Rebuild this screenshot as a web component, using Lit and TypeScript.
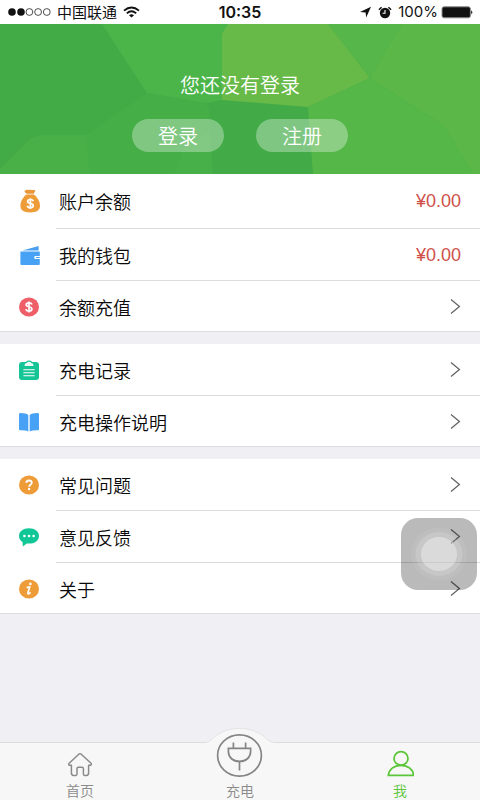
import { LitElement, html, svg, css, nothing, type TemplateResult } from "lit";
import { customElement, property } from "lit/decorators.js";
import { classMap } from "lit/directives/class-map.js";

interface MenuItem {
  label: string;
  icon: string;
  amount?: string;
}

const GROUPS: MenuItem[][] = [
  [
    { label: "账户余额", icon: "bag", amount: "¥0.00" },
    { label: "我的钱包", icon: "wallet", amount: "¥0.00" },
    { label: "余额充值", icon: "coin" },
  ],
  [
    { label: "充电记录", icon: "clipboard" },
    { label: "充电操作说明", icon: "book" },
  ],
  [
    { label: "常见问题", icon: "question" },
    { label: "意见反馈", icon: "chat" },
    { label: "关于", icon: "info" },
  ],
];

const DOLLAR = svg`<path d="M15 9.6C14.6 8.4 13.5 7.9 12 7.9C10.3 7.9 9.2 8.6 9.2 9.8C9.2 12.6 14.9 11 14.9 14C14.9 15.3 13.7 16 12 16C10.3 16 9.2 15.4 8.9 14.1M12 6.6V17.4" fill="none" stroke="#fff" stroke-width="1.7"/>`;

const ICONS: Record<string, TemplateResult> = {
  bag: svg`
    <path d="M8.4 1.4C9.8 .2 11 1.4 12.4 .8C14 .2 15 1.4 17 1C18.6 1 18.8 2.2 17.6 3L16.8 4.8H9.6L8 3.2C7.2 2.4 7.4 1.6 8.4 1.4Z" fill="#e9973a"/>
    <path d="M9.4 5.6H16.8C20.4 8.4 23 12.6 23 16.8C23 21.2 19.8 23.4 13.2 23.4C6.6 23.4 3.4 21.2 3.4 16.8C3.4 12.6 6 8.4 9.4 5.6Z" fill="#ee9c37"/>
    <g transform="translate(1.4 2.6)">${DOLLAR}</g>`,
  wallet: svg`
    <path d="M5.5 7.6L21.6 3V7.6Z" fill="#4a9fee"/>
    <path d="M3.4 8.6H22.8V13H18.6Q17.2 13 17.2 14.4Q17.2 16 18.6 16H22.8V21Q22.8 22 21.8 22H4.4Q3.4 22 3.4 21Z" fill="#47a2f5"/>
    <path d="M19 14H22.8V15H19Z" fill="#47a2f5"/>`,
  coin: svg`<ellipse cx="12" cy="12" rx="10" ry="9.4" fill="#ef5f68"/>${DOLLAR}`,
  clipboard: svg`
    <rect x="2" y="4" width="20" height="18" rx="3" fill="#14c595"/>
    <path d="M7 6.4Q7.4 3.9 9 3.8Q10 2.4 12 2.4Q14 2.4 15 3.8Q16.6 3.9 17 6.4Z" fill="#14c595"/>
    <path d="M7.6 8V6.6Q8 5.2 9.8 5Q10.4 3.8 12 3.8Q13.6 3.8 14.2 5Q16 5.2 16.4 6.6V8Z" fill="#e9fbf5"/>
    <path d="M6.4 11.8H17.6M6.4 14.8H17.6M6.4 17.8H17.6" stroke="#fff" stroke-width="1.1"/>`,
  book: svg`
    <path d="M2 4.4Q2 3 3.4 3.1Q9 3.2 11.3 4.9V21.4Q9 20.1 3 20.2Q2 20.2 2 19.2Z" fill="#47a2f5"/>
    <path d="M22 4.4Q22 3 20.6 3.1Q15 3.2 12.7 4.9V21.4Q15 20.1 21 20.2Q22 20.2 22 19.2Z" fill="#47a2f5"/>`,
  question: svg`
    <ellipse cx="12" cy="12" rx="10" ry="9.4" fill="#ee9c37"/>
    <path d="M9.3 9.9C9.4 8.3 10.4 7.5 12 7.5C13.6 7.5 14.8 8.4 14.8 9.8C14.8 11.7 12.1 11.7 12.1 13.7" fill="none" stroke="#fff" stroke-width="1.8"/>
    <circle cx="12.1" cy="16" r="1.2" fill="#fff"/>`,
  chat: svg`
    <path d="M12 3.2C17.8 3.2 22 6.4 22 10.9C22 15.4 17.8 18.6 12 18.6C11.2 18.6 10.6 18.6 9.8 18.5L5.8 21.4L5.6 17C3.4 15.6 2 13.6 2 10.9C2 6.4 6.2 3.2 12 3.2Z" fill="#12c797"/>
    <g fill="#fff"><circle cx="7.4" cy="11" r="1.3"/><circle cx="12" cy="11" r="1.3"/><circle cx="16.6" cy="11" r="1.3"/></g>`,
  info: svg`
    <ellipse cx="12" cy="12" rx="10" ry="9.4" fill="#ee9c37"/>
    <circle cx="13.4" cy="6.9" r="1.3" fill="#fff"/>
    <path d="M9.6 10.6L12.8 9.8L10.9 15.8Q10.6 17.3 11.7 16.9L13.6 15.4" fill="none" stroke="#fff" stroke-width="1.6" stroke-linejoin="round"/>`,
};

@customElement("menu-row")
class MenuRow extends LitElement {
  @property({ attribute: false }) item!: MenuItem;

  static styles = css`
    :host {
      display: block;
    }
    .row {
      display: flex;
      align-items: center;
      gap: 18px;
      min-height: 51px;
      padding: 0 19px 0 17px;
      box-sizing: border-box;
      color: #0a0a0a;
      font-size: 18px;
      line-height: 24px;
      text-decoration: none;
    }
    .icon {
      width: 24px;
      height: 24px;
      flex: none;
    }
    .label {
      flex: 1;
      font-weight: 350;
    }
    .amount {
      color: #cf5049;
      font-family: "Liberation Sans", Arial, sans-serif;
    }
    .chevron {
      width: 12px;
      height: 18px;
      flex: none;
    }
  `;

  render() {
    const { label, icon, amount } = this.item;
    return html`
      <a class="row" href="#">
        <svg class="icon" viewBox="0 0 24 24" aria-hidden="true">${ICONS[icon]}</svg>
        <span class="label">${label}</span>
        ${amount
          ? html`<span class="amount">${amount}</span>`
          : html`<svg class="chevron" viewBox="0 0 12 18" aria-hidden="true">
              <path d="M2 1.5L10.4 8.5L2 15.5" fill="none" stroke="#66666a" stroke-width="1.3" />
            </svg>`}
      </a>
    `;
  }
}

@customElement("status-bar")
class StatusBar extends LitElement {
  static styles = css`
    :host {
      display: grid;
      grid-template-columns: 1fr auto 1fr;
      align-items: center;
      height: 24px;
      padding: 0 7px;
      background: #fff;
      color: #111;
      font-size: 15px;
      line-height: 20px;
    }
    .side {
      display: flex;
      align-items: center;
      gap: 6px;
    }
    .end {
      justify-content: flex-end;
    }
    .latin {
      font-family: Inter, "Liberation Sans", sans-serif;
    }
    .time {
      font-family: Inter, "Liberation Sans", sans-serif;
      font-size: 16px;
      font-weight: 600;
    }
    .battery {
      margin-left: -3px;
    }
    svg {
      flex: none;
    }
  `;

  render() {
    return html`
      <div class="side">
        <svg width="44" height="10" viewBox="0 0 44 10" aria-hidden="true">
          <circle cx="5" cy="5" r="3.8" fill="#111" />
          <circle cx="14" cy="5" r="3.8" fill="#111" />
          ${[22.4, 31.1, 39.8].map(
            (x) => svg`<circle cx=${x} cy="5" r="3.4" fill="none" stroke="#222" stroke-width=".8"/>`
          )}
        </svg>
        <span>中国联通</span>
        <svg width="17" height="12" viewBox="0 0 17 12" aria-hidden="true">
          <g fill="none" stroke="#111" stroke-width="1.9">
            <path d="M1 4.6Q8.5 -1.8 16 4.6" />
            <path d="M3.8 7.4Q8.5 3.2 13.2 7.4" />
          </g>
          <path d="M6 9.2Q8.5 7.2 11 9.2L8.5 11.6Z" fill="#111" />
        </svg>
      </div>
      <span class="time">10:35</span>
      <div class="side end">
        <svg width="13" height="12" viewBox="0 0 13 12" aria-hidden="true">
          <path d="M12 .8L7.2 11.4L6.6 6.4L1 6Z" fill="#111" />
        </svg>
        <svg width="14" height="13" viewBox="0 0 14 13" aria-hidden="true">
          <circle cx="7" cy="7" r="5.2" fill="#111" />
          <path d="M7 4V7.3H4.6" fill="none" stroke="#fff" stroke-width="1.1" />
          <path d="M.9 3.8L3.6 1.2M13.1 3.8L10.4 1.2" stroke="#111" stroke-width="1.5" />
        </svg>
        <span class="latin">100%</span>
        <svg class="battery" width="32" height="13" viewBox="0 0 32 13" aria-hidden="true">
          <rect x="1" y=".8" width="28.4" height="11" rx="2" fill="#111" stroke="#8c8c8c" />
          <path d="M30.2 4.2Q32.4 6.3 30.2 8.4Z" fill="#111" />
        </svg>
      </div>
    `;
  }
}

@customElement("tab-bar")
class TabBar extends LitElement {
  static styles = css`
    :host {
      display: block;
      position: sticky;
      bottom: 0;
    }
    .bar {
      display: grid;
      grid-template-columns: repeat(3, 1fr);
      grid-template-rows: 100%;
      height: 58px;
      box-sizing: border-box;
      border-top: 1px solid #dcdcde;
      background: #f7f7f7;
    }
    .tab {
      display: flex;
      flex-direction: column;
      align-items: center;
      justify-content: flex-end;
      min-height: 0;
      color: #8a8a8a;
      font-size: 14px;
      font-weight: 350;
      line-height: 20px;
      text-decoration: none;
    }
    .active {
      color: #5cc63a;
    }
    .glyph {
      flex: none;
      width: 28px;
      height: 28px;
      margin-bottom: 2px;
    }
    .raised {
      flex: none;
      width: 68px;
      height: 50px;
      margin-bottom: 2px;
    }
  `;

  render() {
    return html`
      <nav class="bar">
        <a class="tab" href="#">
          <svg class="glyph" viewBox="0 0 28 28" aria-hidden="true">
            <path
              d="M3.2 15.2Q2.2 14 3.4 13L12.8 4.2Q14 3.2 15.2 4.2L24.8 13Q26 14 24.8 15.2H22.6V23Q22.6 25.4 20.4 25.4H18.6Q17.4 25.4 17.4 24V18.6Q17.4 17.2 16 17.2H12.4Q11 17.2 11 18.6V24Q11 25.4 9.8 25.4H7.6Q5.4 25.4 5.4 23V15.2Z"
              fill="none" stroke="currentColor" stroke-width="1.5" stroke-linejoin="round"
            />
          </svg>
          <span>首页</span>
        </a>
        <a class="tab" href="#">
          <svg class="raised" viewBox="0 0 68 50" aria-hidden="true">
            <path d="M0 14.5Q3 14.5 6 11.2C20 -3.2 47 -3.2 61 11.2Q64 14.5 68 14.5V50H0Z" fill="#f7f7f7" />
            <path d="M0 14.5Q3 14 6 11.2C20 -3.2 47 -3.2 61 11.2Q64 14 68 14.5" fill="none" stroke="#e4e4e6" />
            <g fill="none" stroke="#858585" stroke-width="1.7">
              <ellipse cx="33.5" cy="27.5" rx="21.9" ry="20.6" />
              <path d="M21.5 20.4H45.5M22.4 20.4V23.6C22.4 29.6 27 33.4 33.5 33.4C40 33.4 44.6 29.6 44.6 23.6V20.4M27.4 20V14.4M39.6 20V14.4M33.5 33.4V42.6" />
            </g>
          </svg>
          <span>充电</span>
        </a>
        <a class=${classMap({ tab: true, active: true })} href="#" aria-current="page">
          <svg class="glyph" viewBox="0 0 28 28" aria-hidden="true">
            <g fill="none" stroke="currentColor" stroke-width="1.8">
              <ellipse cx="15" cy="8.4" rx="7" ry="6.8" />
              <path d="M15 15.4C8 15.4 2.8 19.4 2.4 25.4H27.6C27.2 19.4 22 15.4 15 15.4Z" />
            </g>
          </svg>
          <span>我</span>
        </a>
      </nav>
    `;
  }
}

@customElement("app-root")
class AppRoot extends LitElement {
  static styles = css`
    :host {
      display: flex;
      flex-direction: column;
      position: relative;
      min-height: 100vh;
      background: #efeff4;
      font-family: "Noto Sans CJK SC", "Noto Sans", sans-serif;
    }
    .hero {
      display: grid;
      height: 150px;
      overflow: hidden;
      background: #43ab46;
      color: #fff;
    }
    .facets,
    .login {
      grid-area: 1 / 1;
      min-width: 0;
      min-height: 0;
    }
    .facets {
      width: 100%;
      height: 150px;
    }
    .login {
      z-index: 1;
      display: flex;
      flex-direction: column;
      align-items: center;
      justify-content: flex-end;
      gap: 20px;
      padding-bottom: 22px;
    }
    .prompt {
      margin: 0;
      font-size: 20px;
      font-weight: 350;
      line-height: 28px;
    }
    .actions {
      display: flex;
      gap: 32px;
    }
    .pill {
      width: 92px;
      height: 33px;
      padding: 0;
      border: 0;
      border-radius: 17px;
      background: rgba(255, 255, 255, 0.32);
      color: #fff;
      font-family: inherit;
      font-size: 20px;
      font-weight: 350;
      line-height: 33px;
    }
    .groups {
      display: flex;
      flex-direction: column;
      gap: 12px;
      padding-bottom: 24px;
    }
    .group {
      margin: 0;
      padding: 0;
      list-style: none;
      background: #fff;
      box-shadow: inset 0 -1px #dddde0;
    }
    .group:first-child li:first-child {
      padding: 1px 0 2px;
    }
    .divider {
      height: 1px;
      margin-left: 56px;
      background: #dcdcde;
    }
    .assist {
      position: absolute;
      top: 518px;
      right: 3px;
      width: 76px;
      height: 72px;
      padding: 0;
      border: 0;
      border-radius: 17px;
      background: rgba(0, 0, 0, 0.27);
    }
    .assist svg {
      display: block;
    }
    tab-bar {
      margin-top: auto;
    }
  `;

  render() {
    return html`
      <status-bar></status-bar>
      <header class="hero">
        <svg class="facets" viewBox="0 0 480 150" preserveAspectRatio="none" aria-hidden="true">
          <path d="M102 0H230L222 76L205 79L147 69Z" fill="#4cb54a" />
          <path d="M147 69L205 79L214 90V150H90L86 111Z" fill="#45ae47" />
          <path d="M0 145L28 117Q34 112 42 111H86L90 150H0Z" fill="#48b047" />
          <path d="M174 150L184 124L209 108L213 150Z" fill="#48b049" />
          <path d="M209 80L222 76L308 83L313 150H213Z" fill="#42ab48" />
          <path d="M228 0L222 10V76L308 83L370 54L328 0Z" fill="#68ba48" />
          <path d="M328 0H402L370 54Z" fill="#57b64a" />
          <path d="M402 0H480V150H473L444 102L370 54Z" fill="#5bb848" />
          <path d="M308 83L370 54L444 102L473 150H313Z" fill="#56b749" />
        </svg>
        <div class="login">
          <p class="prompt">您还没有登录</p>
          <div class="actions">
            <button class="pill" type="button">登录</button>
            <button class="pill" type="button">注册</button>
          </div>
        </div>
      </header>
      <main class="groups">
        ${GROUPS.map(
          (items) => html`
            <ul class="group">
              ${items.map(
                (item, i) => html`
                  <li>
                    ${i > 0 ? html`<div class="divider"></div>` : nothing}
                    <menu-row .item=${item}></menu-row>
                  </li>
                `
              )}
            </ul>
          `
        )}
      </main>
      <button class="assist" type="button" aria-label="AssistiveTouch">
        <svg width="76" height="72" viewBox="0 0 76 72" aria-hidden="true">
          <g fill="#fff">
            <ellipse cx="38" cy="36" rx="28" ry="26.5" fill-opacity=".06" />
            <ellipse cx="38" cy="36" rx="23.5" ry="22" fill-opacity=".14" />
            <ellipse cx="38" cy="36" rx="18.5" ry="17.5" fill-opacity=".34" stroke="#c4c4c4" stroke-width=".8" />
          </g>
        </svg>
      </button>
      <tab-bar></tab-bar>
    `;
  }
}
